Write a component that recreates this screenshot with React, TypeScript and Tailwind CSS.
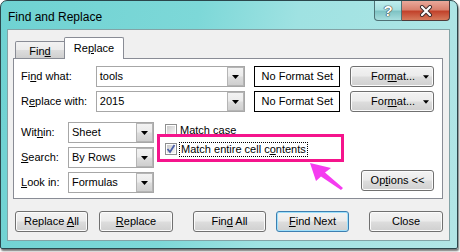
import React from 'react';

const btnBg =
  'bg-[linear-gradient(to_bottom,#f3f3f3_0%,#ebebeb_48%,#dddddd_52%,#cfcfcf_100%)]';

const Arrow: React.FC<{ size?: number }> = ({ size = 7 }) => (
  <svg width={size} height={4} viewBox="0 0 7 4">
    <path d="M0 0 L7 0 L3.5 4 Z" fill="#000" />
  </svg>
);

const Combo: React.FC<{ value: string; width: string }> = ({ value, width }) => (
  <div className={`${width} h-[21px] flex border border-[#a7a7a7] bg-white`}>
    <div className="flex-1 pl-[3px] leading-[19px] text-black">{value}</div>
    <div
      className={`w-[17px] h-[19px] border border-[#b5b5b5] ${btnBg} flex items-center justify-center`}
    >
      <Arrow />
    </div>
  </div>
);

const Button: React.FC<{ children: React.ReactNode; width: string; focus?: boolean; className?: string }> = ({
  children,
  width,
  focus,
  className = '',
}) => (
  <div
    className={`${width} h-[21px] rounded-[3px] border ${
      focus ? 'border-[#3c7fb1] shadow-[inset_0_0_0_1px_#9fe0fb]' : 'border-[#707070] shadow-[inset_0_0_0_1px_#fbfbfb]'
    } ${btnBg} flex items-center justify-center text-black leading-none ${className}`}
  >
    <span className="whitespace-pre">{children}</span>
  </div>
);

const CheckBox: React.FC<{ checked?: boolean }> = ({ checked }) => (
  <div className="w-[12px] h-[12px] border border-[#8e8f8f] bg-white p-[1px] shrink-0">
    <div className="w-full h-full bg-[linear-gradient(135deg,#cbcbcb,#f6f6f6)] relative">
      {checked && (
        <svg width="10" height="10" viewBox="0 0 10 10" className="absolute -left-[1px] -top-[1px]">
          <path d="M1.5 5 L4 8 L8.5 1" stroke="#4a5fa8" strokeWidth="1.8" fill="none" />
        </svg>
      )}
    </div>
  </div>
);

export default function App() {
  return (
    <div className="w-[460px] h-[252px] bg-white font-['Liberation_Sans',Arial,sans-serif] text-[11px] text-black">
      <div className="w-[458px] h-[249px] rounded-t-[7px] rounded-b-[2px] border border-[#2b474c] bg-[linear-gradient(100deg,#6fd2d2_0%,#7dd8d8_40%,#9fe2e2_60%,#b2e6e6_100%)] shadow-[1px_2px_2px_rgba(0,0,0,0.55)] flex flex-col px-[6px]">
        {/* title bar */}
        <div className="h-[28px] flex items-start">
          <div className="pt-[7px] pl-[1px] text-[12px] text-black">Find and Replace</div>
          <div className="ml-auto mr-[1px] flex">
            <div className="w-[28px] h-[20px] rounded-bl-[4px] border border-t-0 border-[#4e7175] bg-[linear-gradient(to_bottom,#bfeeee_0%,#a6dfe0_45%,#7fc3c4_55%,#a8dede_100%)] flex items-center justify-center">
              <span className="text-white font-bold text-[15px] leading-none [text-shadow:0_0_1px_#333,0_0_1px_#333,0_0_1px_#333]">?</span>
            </div>
            <div className="w-[48px] h-[20px] rounded-br-[4px] border border-t-0 border-l-0 border-[#4e3a3a] bg-[linear-gradient(to_bottom,#e9a99b_0%,#d9826f_45%,#c2432c_55%,#d67a5c_100%)] flex items-center justify-center">
              <svg width="14" height="12" viewBox="0 0 14 12">
                <path d="M3 2 L11 10 M11 2 L3 10" stroke="#3a2a2a" strokeWidth="4" strokeLinecap="round" />
                <path d="M3 2 L11 10 M11 2 L3 10" stroke="#ffffff" strokeWidth="2.2" strokeLinecap="round" />
              </svg>
            </div>
          </div>
        </div>

        {/* client area */}
        <div className="w-[443px] h-[212px] border border-[#83a3a6] bg-[#f0f0f0] px-[5px]">
          {/* tabs */}
          <div className="mt-[7px] h-[21px] flex items-end pl-[2px]">
            <div className="w-[50px] h-[17px] border border-b-0 border-[#898c95] bg-[linear-gradient(to_bottom,#f2f2f2_0%,#ebebeb_50%,#dddddd_51%,#cfcfcf_100%)] rounded-tl-[2px] flex items-center justify-center">
              <span className="pt-[2px]">
                Fin<span className="underline">d</span>
              </span>
            </div>
            <div className="w-[60px] h-[22px] -ml-[1px] -mb-[1px] border border-b-0 border-[#898c95] bg-white rounded-t-[2px] flex items-center justify-center relative z-10">
              <span className="-mt-[1px]">
                Re<span className="underline">p</span>lace
              </span>
            </div>
          </div>

          {/* panel */}
          <div className="w-[430px] h-[141px] border border-[#898c95] bg-white relative pl-[7px] pr-[8px] pt-[7px]">
            <div className="flex items-center h-[21px]">
              <div className="w-[75px]">
                Fi<span className="underline">n</span>d what:
              </div>
              <Combo value="tools" width="w-[150px]" />
              <div className="ml-[9px] w-[86px] h-[21px] border border-black flex items-center justify-center">
                No Format Set
              </div>
              <Button width="w-[84px]" className="ml-[10px] relative">
                <span className="pl-[2px]">
                  For<span className="underline">m</span>at...
                </span>
                <span className="absolute right-[4px] top-[8px]">
                  <Arrow size={6} />
                </span>
              </Button>
            </div>
            <div className="flex items-center h-[21px] mt-[4px]">
              <div className="w-[75px]">
                R<span className="underline">e</span>place with:
              </div>
              <Combo value="2015" width="w-[150px]" />
              <div className="ml-[9px] w-[86px] h-[21px] border border-black flex items-center justify-center">
                No Format Set
              </div>
              <Button width="w-[84px]" className="ml-[10px] relative">
                <span className="pl-[2px]">
                  For<span className="underline">m</span>at...
                </span>
                <span className="absolute right-[4px] top-[8px]">
                  <Arrow size={6} />
                </span>
              </Button>
            </div>

            <div className="flex mt-[10px]">
              <div className="flex flex-col gap-[4px]">
                <div className="flex items-center">
                  <div className="w-[47px]">
                    Wit<span className="underline">h</span>in:
                  </div>
                  <Combo value="Sheet" width="w-[86px]" />
                </div>
                <div className="flex items-center">
                  <div className="w-[47px]">
                    <span className="underline">S</span>earch:
                  </div>
                  <Combo value="By Rows" width="w-[86px]" />
                </div>
                <div className="flex items-center">
                  <div className="w-[47px]">
                    <span className="underline">L</span>ook in:
                  </div>
                  <Combo value="Formulas" width="w-[86px]" />
                </div>
              </div>

              <div className="ml-[11px] pt-[1px] flex flex-col gap-[5px]">
                <div className="flex items-center gap-[3px] h-[14px]">
                  <CheckBox />
                  <span className="leading-[14px]">
                    Match <span className="underline">c</span>ase
                  </span>
                </div>
                <div className="flex items-center gap-[2px] h-[14px]">
                  <CheckBox checked />
                  <span className="border border-dotted border-black px-[1px] leading-[13px]">
                    Match entire cell c<span className="underline">o</span>ntents
                  </span>
                </div>
              </div>

              <div className="ml-auto self-end mb-[2px]">
                <Button width="w-[73px]">
                  Op<span className="underline">t</span>ions &lt;&lt;
                </Button>
              </div>
            </div>

            {/* annotation overlay */}
            <div className="absolute left-[143px] top-[75px] w-[187px] h-[28px] border-[3px] border-[#f5148c] pointer-events-none" />
            <svg
              className="absolute left-[290px] top-[100px] pointer-events-none"
              width="50"
              height="35"
              viewBox="0 0 50 35"
            >
              <path d="M6 4 L27 9 L21 13.5 L39 29 L37 31 L17 17.5 L12 22 Z" fill="#f53cf0" />
            </svg>
          </div>

          {/* bottom buttons */}
          <div className="flex mt-[12px] pl-[2px]">
            <Button width="w-[73px]">
              Replace <span className="underline">A</span>ll
            </Button>
            <Button width="w-[74px]" className="ml-[11px]">
              <span className="underline">R</span>eplace
            </Button>
            <Button width="w-[73px]" className="ml-[20px]">
              Fin<span className="underline">d</span> All
            </Button>
            <Button width="w-[73px]" focus className="ml-[10px]">
              <span className="underline">F</span>ind Next
            </Button>
            <Button width="w-[74px]" className="ml-[20px]">
              Close
            </Button>
          </div>
        </div>
      </div>
    </div>
  );
}
